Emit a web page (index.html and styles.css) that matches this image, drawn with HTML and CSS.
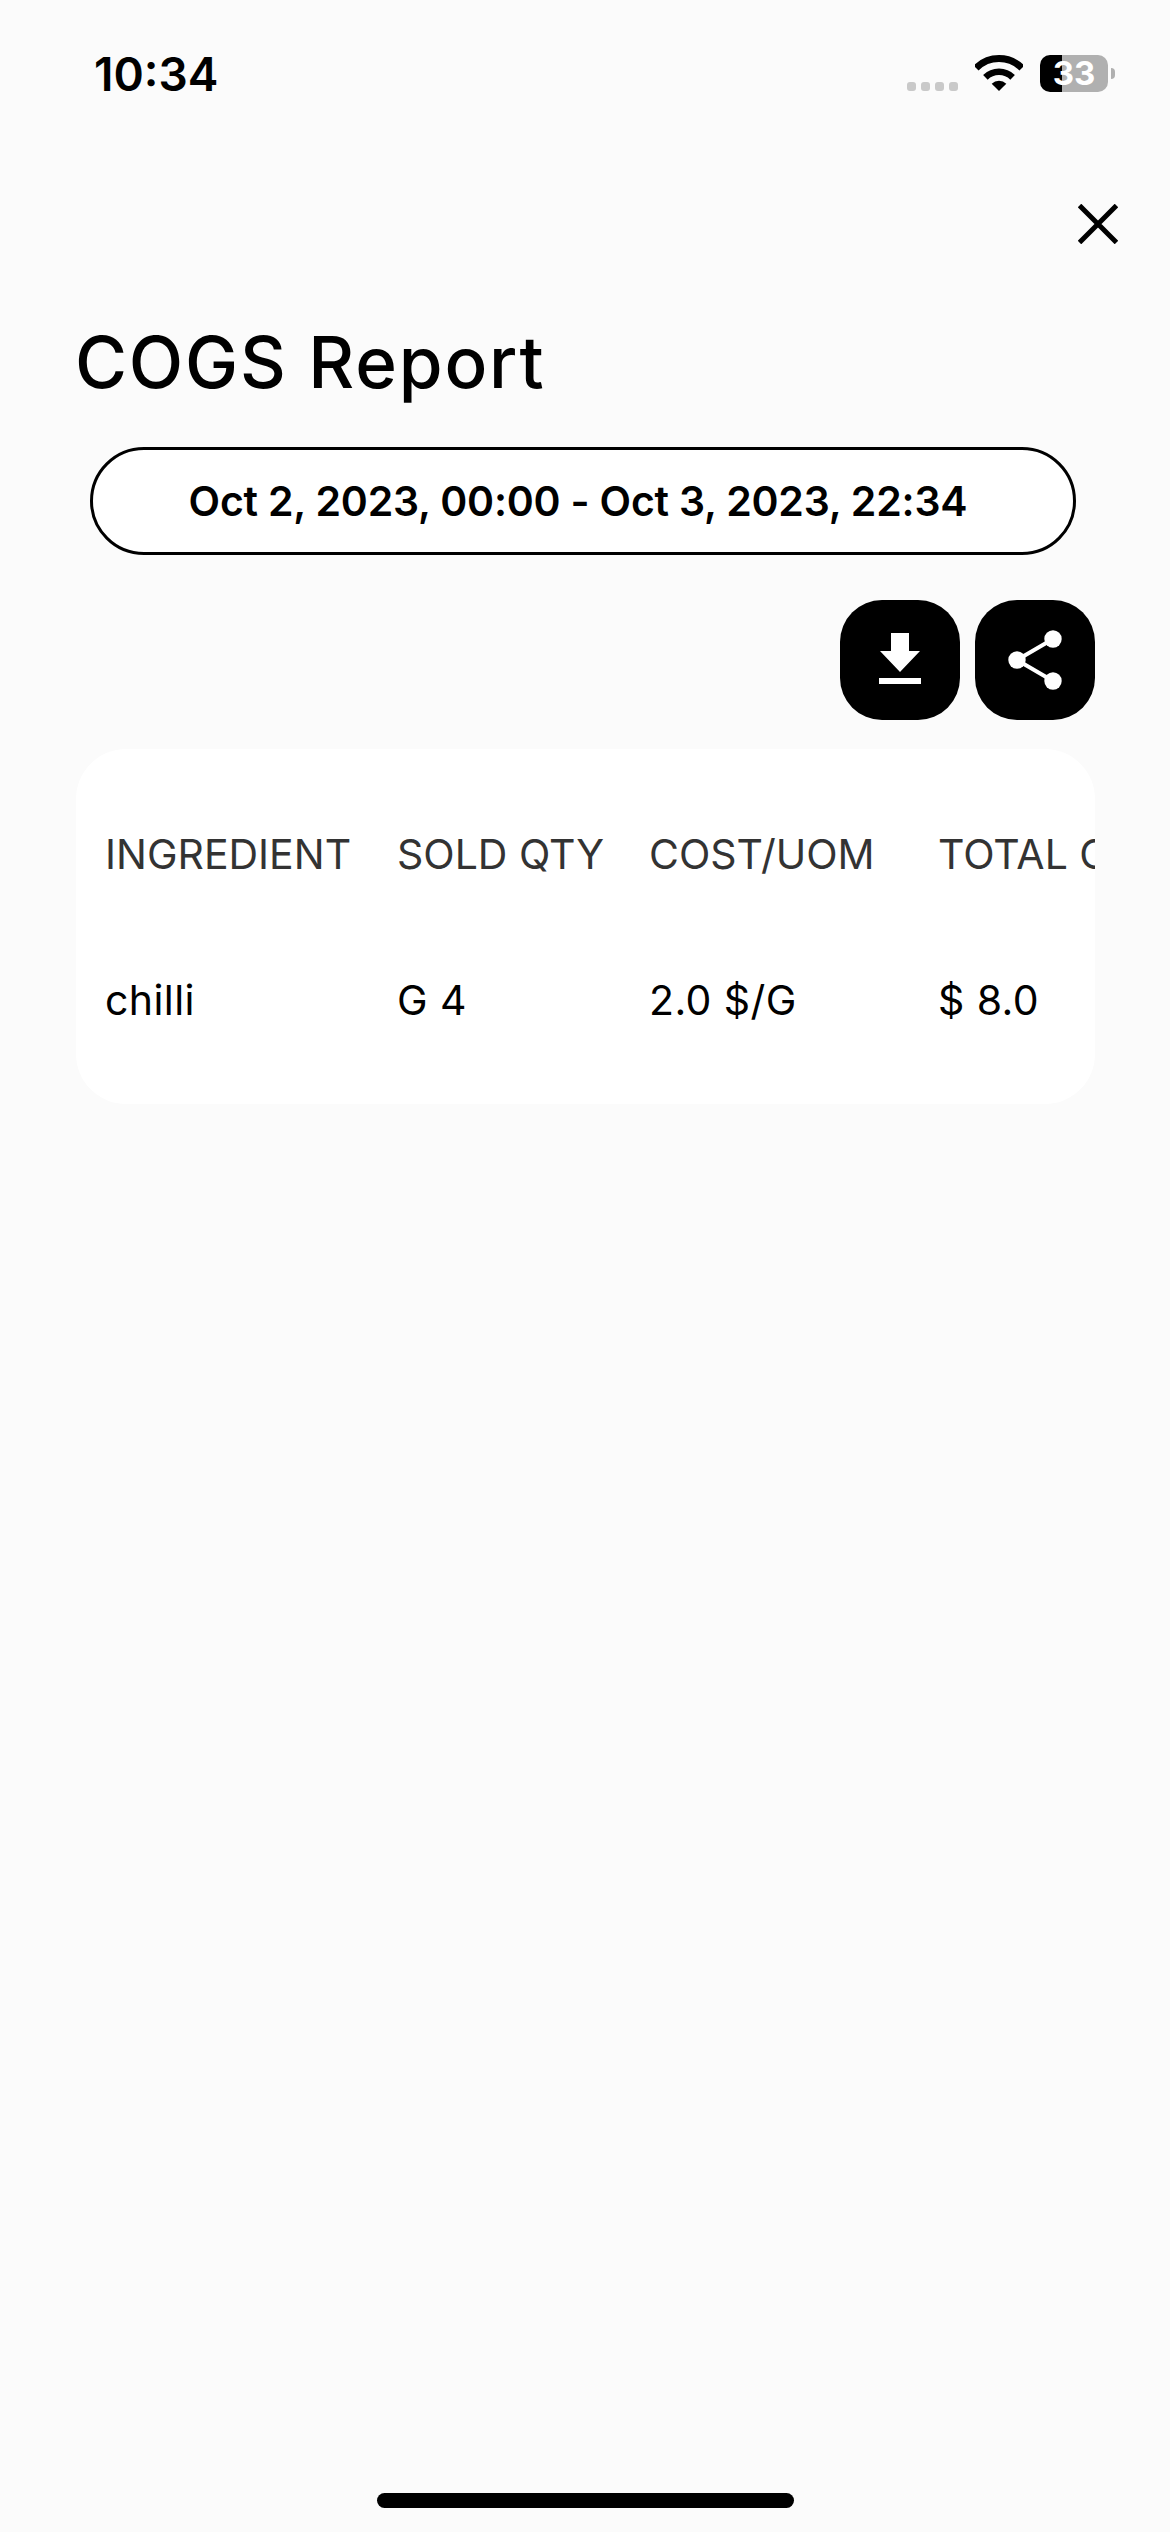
FILE: index.html
```html
<!DOCTYPE html>
<html lang="en">
<head>
  <meta charset="UTF-8">
  <meta name="viewport" content="width=device-width, initial-scale=1.0">
  <title>COGS Report</title>
  <link rel="stylesheet" href="styles.css">
</head>
<body>
  <div class="status-bar">
    <span class="status-time">10:34</span>
    <div class="status-icons">
      <div class="signal-dots"><i></i><i></i><i></i><i></i></div>
      <svg class="wifi" width="48" height="36" viewBox="0 0 48 36">
        <path d="M1.1 13.1A32.4 32.4 0 0 1 46.9 13.1" fill="none" stroke="#000" stroke-width="7"/>
        <path d="M10.4 22.4A19.3 19.3 0 0 1 37.6 22.4" fill="none" stroke="#000" stroke-width="6.5"/>
        <path d="M24 36L16.7 28.7A10.3 10.3 0 0 1 31.3 28.7Z" fill="#000"/>
      </svg>
      <div class="battery"><span class="battery-level">33</span><i class="battery-nub"></i></div>
    </div>
  </div>

  <div class="close-row">
    <svg width="40" height="40" viewBox="0 0 40 40">
      <path d="M1.5 1.5L38.5 38.5M38.5 1.5L1.5 38.5" stroke="#000" stroke-width="5"/>
    </svg>
  </div>

  <h1 class="title">COGS Report</h1>

  <div class="date-range">Oct 2, 2023, 00:00 - Oct 3, 2023, 22:34</div>

  <div class="actions">
    <button class="icon-btn">
      <svg class="download-icon" width="42" height="51" viewBox="0 0 42 51">
        <path d="M12 0H30V18H41L21 39L1 18H12Z" fill="#fff"/>
        <rect x="0" y="45" width="42" height="6" fill="#fff"/>
      </svg>
    </button>
    <button class="icon-btn">
      <svg width="54" height="60" viewBox="0 0 54 60">
        <path d="M45 9L9 30L45 51" fill="none" stroke="#fff" stroke-width="4"/>
        <circle cx="45" cy="9" r="8.7" fill="#fff"/>
        <circle cx="9" cy="30" r="8.7" fill="#fff"/>
        <circle cx="45" cy="51" r="8.7" fill="#fff"/>
      </svg>
    </button>
  </div>

  <div class="report-card">
    <div class="report-table">
      <div class="cell head">INGREDIENT</div>
      <div class="cell head">SOLD QTY</div>
      <div class="cell head">COST/UOM</div>
      <div class="cell head">TOTAL COST</div>
      <div class="cell">chilli</div>
      <div class="cell">G 4</div>
      <div class="cell">2.0 $/G</div>
      <div class="cell">$ 8.0</div>
    </div>
  </div>

  <div class="home-bar"></div>
</body>
</html>
```

FILE: styles.css
```css
body{
  margin: 0;
  padding: 0;
  width: 1170px;
  height: 2532px;
  display: flex;
  flex-direction: column;
  background-color: #fbfbfb;
  color: #000;
  font-family: Inter, "Liberation Sans", sans-serif;
  overflow: hidden;
}
.status-bar{
  display: flex;
  justify-content: space-between;
  height: 204px;
  box-sizing: border-box;
  padding: 47px 62px 0 94px;
}
.status-time{
  font-size: 46px;
  font-weight: 600;
  line-height: 54px;
  height: 54px;
}
.status-icons{
  display: flex;
  align-items: flex-start;
  padding-top: 8px;
}
.signal-dots{
  display: flex;
  gap: 5px;
  margin-top: 27px;
  margin-right: 17px;
}
.signal-dots i{
  width: 9px;
  height: 9px;
  border-radius: 3px;
  background-color: #c9c9c9;
}
.wifi{
  margin-right: 17px;
}
.battery{
  position: relative;
  width: 68px;
  height: 37px;
  border-radius: 10px;
  background: linear-gradient(to right, #000 22px, #b0b0b0 22px);
  text-align: center;
}
.battery-level{
  color: #fff;
  font-size: 33px;
  font-weight: 700;
  line-height: 37px;
}
.battery-nub{
  position: absolute;
  left: 71px;
  top: 13px;
  width: 4px;
  height: 11px;
  border-radius: 0 6px 6px 0;
  background-color: #b0b0b0;
}
.close-row{
  display: flex;
  justify-content: flex-end;
  padding-right: 52px;
  height: 40px;
}
.title{
  margin: 76px 0 0 75px;
  font-size: 71px;
  font-weight: 500;
  line-height: 84px;
  height: 84px;
  letter-spacing: 1.8px;
}
.date-range{
  margin: 43px 0 0 90px;
  width: 986px;
  height: 108px;
  box-sizing: border-box;
  border: 3px solid #000;
  border-radius: 54px;
  padding-right: 10px;
  background-color: #fff;
  text-align: center;
  font-size: 41px;
  font-weight: 600;
  line-height: 102px;
  letter-spacing: -0.2px;
}
.actions{
  display: flex;
  justify-content: flex-end;
  gap: 15px;
  margin-top: 45px;
  padding-right: 75px;
}
.icon-btn{
  display: flex;
  align-items: center;
  justify-content: center;
  width: 120px;
  height: 120px;
  padding: 0;
  border: none;
  border-radius: 42px;
  background-color: #000;
}
.download-icon{
  margin-bottom: 3px;
}
.report-card{
  margin: 29px 75px 0 76px;
  height: 355px;
  border-radius: 50px;
  background-color: #fff;
  overflow: hidden;
}
.report-table{
  display: grid;
  grid-template-columns: 292px 252px 289px 300px;
  grid-template-rows: 146px 146px;
  padding: 32px 0 0 29px;
  width: 1133px;
}
.cell{
  display: flex;
  align-items: center;
  white-space: nowrap;
  font-size: 41px;
  letter-spacing: 0.4px;
}
.cell.head{
  color: #333;
  letter-spacing: 0;
}
.home-bar{
  width: 417px;
  height: 15px;
  margin: auto auto 24px;
  border-radius: 8px;
  background-color: #000;
}
```
